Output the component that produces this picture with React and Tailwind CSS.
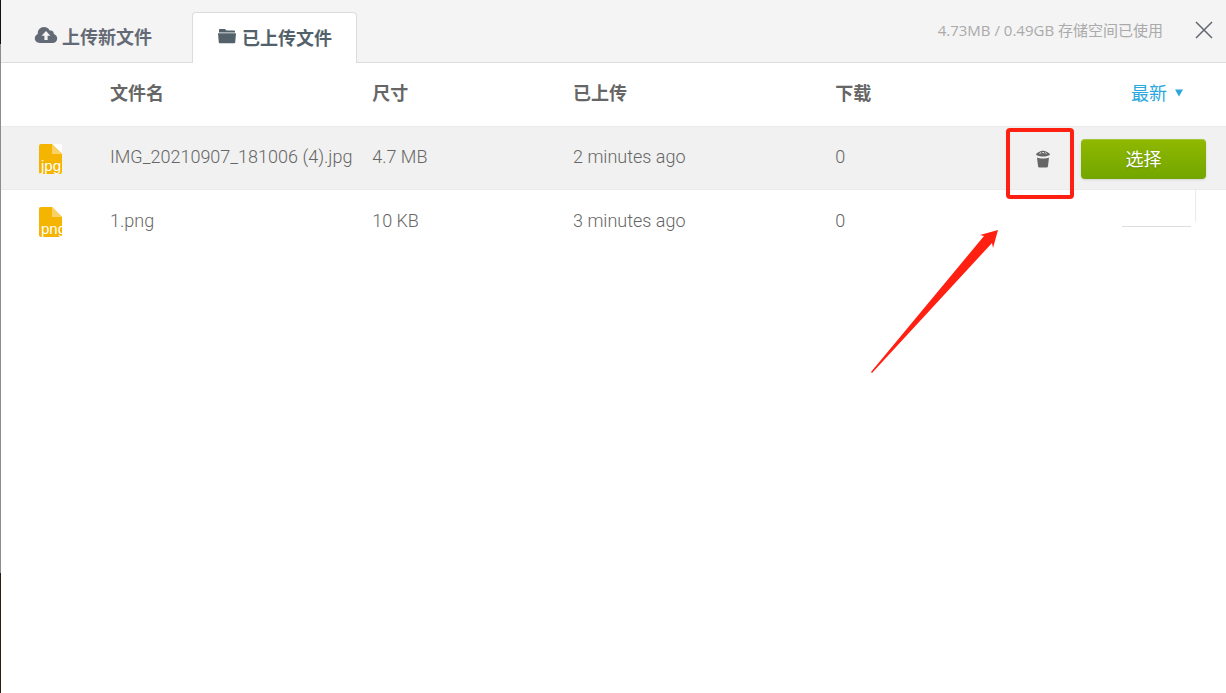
import React, { useState } from "react";

const initialFiles = [
  { name: "IMG_20210907_181006 (4).jpg", type: "jpg", size: "4.7 MB", uploaded: "2 minutes ago", downloads: 0 },
  { name: "1.png", type: "png", size: "10 KB", uploaded: "3 minutes ago", downloads: 0 },
];

const CloudIcon = () => (
  <svg viewBox="0 0 24 18" className="mb-1 h-[18px] w-6" aria-hidden="true">
    <path
      fill="currentColor"
      fillRule="evenodd"
      d="M6 17C2.8 17 .8 14.9.8 12.3c0-2 1.200-3.600 3-4.300C3.400 4.200 6.200 1 10 1c2.600 0 4.700 1.400 5.700 3.500 2.400-.6 4.300 1.100 4.200 3.500 2 .7 3.300 2.300 3.300 4.400 0 2.600-2 4.600-4.800 4.600zM12 5L7.600 9.800h2.800V14h3.200V9.800h2.800z"
    />
  </svg>
);

const FolderIcon = () => (
  <svg viewBox="0 0 18 16" className="mb-1 h-4 w-[18px]" aria-hidden="true">
    <path fill="currentColor" d="M1 1.500Q1 1 1.500 1h5.500l1.500 1.500h7.500Q17 2.500 17 3.500V4.500H1zM0 5.200h18l-.8 9.300q0 .8-.8.8H1.600q-.8 0-.8-.8z" />
  </svg>
);

const TrashIcon = () => (
  <svg viewBox="0 0 14 18" className="h-[18px] w-[14px]" aria-hidden="true">
    <path fill="currentColor" d="M0 4.800C.3 3.200 2.600 2 4 1.600 5 .6 9 .6 10 1.600c1.400.4 3.700 1.600 4 3.200-1.500 1.200-4 1.800-7 1.800S1.500 6 0 4.800zM1 7.400c3 1.300 9 1.300 12 0l-1 8.600c-.1.900-.8 1.600-2 1.600H4c-1.200 0-1.900-.7-2-1.600z" />
    <path stroke="#f1f1f1" strokeWidth="1" fill="none" d="M3.500 3.600L5 2.600M6 3.200l1-1 1.200 1M9.300 2.600l1.200 1" />
  </svg>
);

const FileIcon = ({ type }) => (
  <span className="relative block h-[30px] w-[23px] overflow-hidden">
    <svg viewBox="0 0 23 30" className="h-[30px] w-[23px]" aria-hidden="true">
      <path fill="#fff" d="M13 0h10v10z" />
      <path fill="#f5b400" d="M2 0h11l10 10v18q0 2-2 2H2q-2 0-2-2V2q0-2 2-2z" />
      <path fill="#fad165" d="M13 0l10 10H13z" />
    </svg>
    <span className="absolute bottom-0 left-0.5 font-['Liberation_Sans',sans-serif] text-[15px] leading-4 font-normal text-white">
      {type}
    </span>
  </span>
);

const App = () => {
  const [files, setFiles] = useState(initialFiles);
  const [selected, setSelected] = useState(null);

  const removeFile = (name) => setFiles(files.filter((file) => file.name !== name));

  return (
    <div className="flex min-h-screen bg-white font-['Roboto','Noto_Sans_CJK_SC',sans-serif] text-[#666]">
      {/* Page behind the dialog */}
      <div className="flex w-px shrink-0 flex-col">
        <div className="h-11 bg-[#111]"></div>
        <div className="grow bg-[#8c8c8c]"></div>
        <div className="h-[120px] bg-[#2a1d18]"></div>
      </div>

      <main className="min-w-0 grow">
        <header className="flex h-[63px] items-end justify-between border-b border-[#dcdcdc] bg-[#f4f4f4]">
          <nav className="flex items-end text-[18px] font-bold">
            <a href="#upload" className="flex h-[50px] items-center gap-1 pr-10 pl-[33px] text-[#646a75]">
              <CloudIcon />
              上传新文件
            </a>
            <a
              href="#files"
              className="-mb-px flex h-[51px] items-center gap-1.5 rounded-t border border-b-0 border-[#dcdcdc] bg-white pr-6 pl-[25px] text-[#53616b]"
            >
              <FolderIcon />
              已上传文件
            </a>
          </nav>
          <div className="flex h-full items-center gap-8 pr-[13px] pb-0.5">
            <p className="font-['Open_Sans','Noto_Sans_CJK_SC',sans-serif] text-[15px] text-[#aaa]">4.73MB / 0.49GB 存储空间已使用</p>
            <button aria-label="关闭" className="text-[#5f6670]">
              <svg viewBox="0 0 18 18" className="size-[18px]" fill="none" stroke="currentColor" strokeWidth="1.500">
                <path d="M1 1l16 16M17 1L1 17" />
              </svg>
            </button>
          </div>
        </header>

        <table className="w-full table-fixed text-left text-[18px]">
          <thead>
            <tr className="h-[63px]">
              <th className="w-[109px]"></th>
              <th className="w-[21.4%] pb-0.5">文件名</th>
              <th className="w-[16.4%] pb-0.5">尺寸</th>
              <th className="w-[21.4%] pb-0.5">已上传</th>
              <th className="pb-0.5">下载</th>
              <th className="w-[220px] pr-[43px] pb-0.5 text-right font-normal">
                <button className="inline-flex items-center gap-2 text-[#2aa7dc]">
                  最新
                  <svg viewBox="0 0 8 8" className="size-2" aria-hidden="true">
                    <path fill="currentColor" d="M0 .5h8l-4 7z" />
                  </svg>
                </button>
              </th>
            </tr>
          </thead>
          <tbody className="font-light">
            {files.map((file, index) => (
              <tr key={file.name} className={index === 0 ? "h-[63px] border-y border-[#ebebeb] bg-[#f1f1f1]" : "h-16"}>
                <td className="pt-0.5 pl-[38px]">
                  <FileIcon type={file.type} />
                </td>
                <td className="pb-0.5 whitespace-nowrap">{file.name}</td>
                <td className="pb-0.5">{file.size}</td>
                <td className="pb-0.5">{file.uploaded}</td>
                <td className="pb-0.5">{file.downloads}</td>
                <td className="relative pt-0.5 pr-5">
                  {index === 0 ? (
                    <div className="flex items-center justify-end gap-[31px]">
                      <button aria-label="删除" onClick={() => removeFile(file.name)} className="relative">
                        <TrashIcon />
                        {/* Red frame and arrow pointing at the delete button */}
                        <span className="pointer-events-none absolute -top-[22px] -left-[30px] h-[71px] w-[68px] rounded border-4 border-[#ff2012]"></span>
                        <svg
                          viewBox="0 0 128 144"
                          className="pointer-events-none absolute top-20 -left-[165px] h-36 w-32"
                          aria-hidden="true"
                        >
                          <path fill="#ff2012" d="M127 0l-5 18-1-5L1 143l-1-1L113 6l-4-1z" />
                        </svg>
                      </button>
                      <button
                        onClick={() => setSelected(file.name)}
                        aria-pressed={selected === file.name}
                        className="h-10 w-[125px] rounded border-t border-[#a4c639] bg-linear-to-b from-[#8fb800] to-[#72a600] font-normal text-white shadow-sm text-shadow-sm"
                      >
                        选择
                      </button>
                    </div>
                  ) : (
                    <>
                      <span className="absolute top-0 right-[30px] h-8 w-px bg-[#ebebeb]"></span>
                      <span className="absolute top-9 right-[35px] h-px w-[69px] bg-[#dedede]"></span>
                    </>
                  )}
                </td>
              </tr>
            ))}
          </tbody>
        </table>
      </main>
    </div>
  );
};

export default App;
